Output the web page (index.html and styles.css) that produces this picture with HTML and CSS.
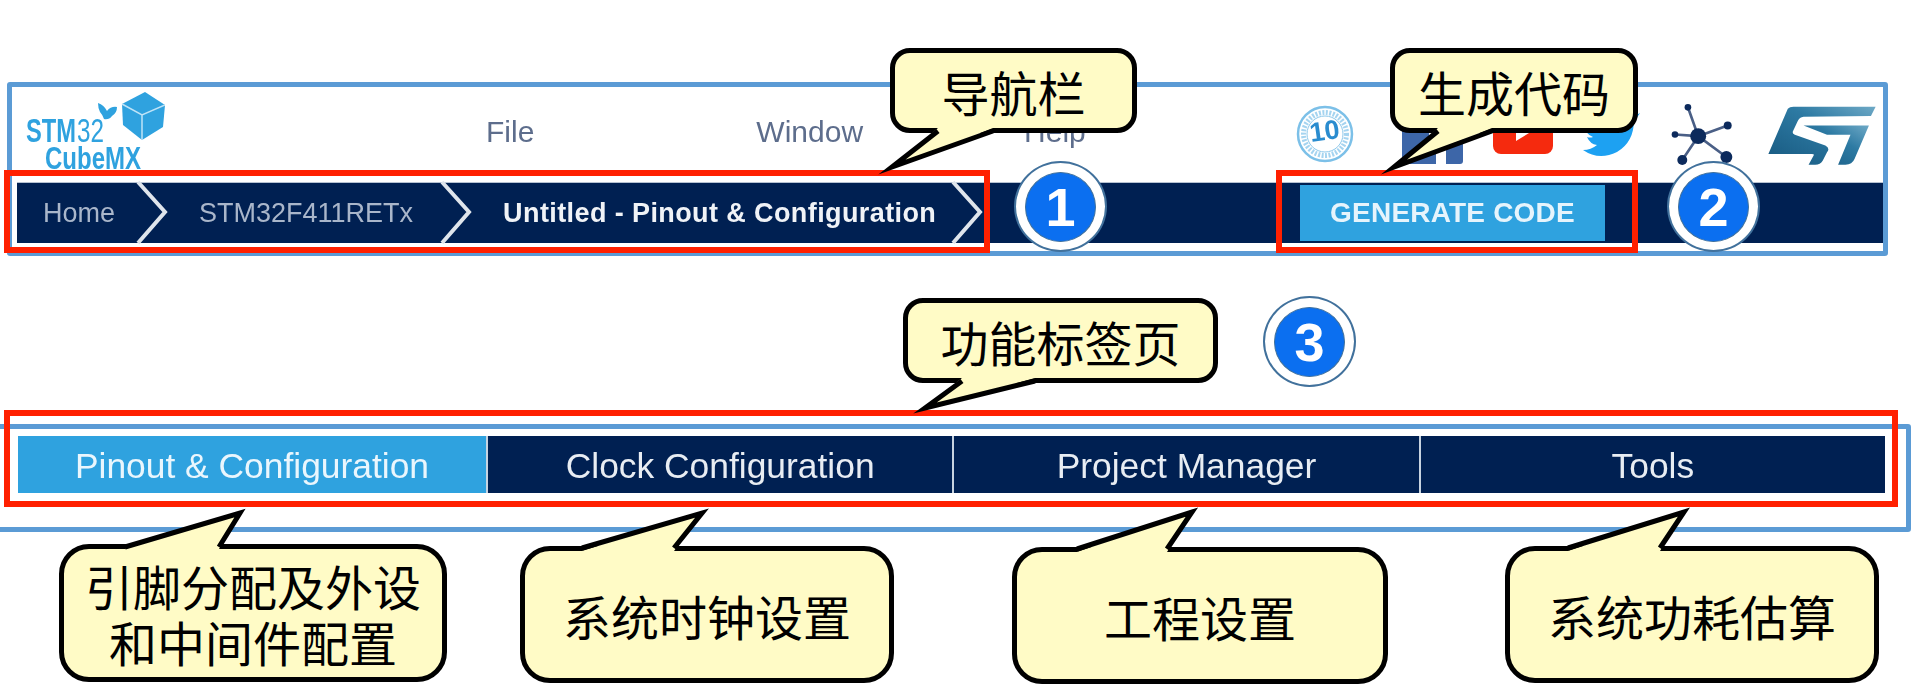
FILE: index.html
```html
<!DOCTYPE html>
<html lang="zh">
<head>
<meta charset="utf-8">
<title>STM32CubeMX</title>
<link rel="stylesheet" href="styles.css">
</head>
<body>
<section class="frame nav-frame">
  <div class="top-row">
    <svg class="logo" viewBox="15 87 150 96" width="150" height="96">
      <text class="logo-text" x="26" y="142" font-size="33" font-weight="700" textLength="50" lengthAdjust="spacingAndGlyphs">STM</text>
      <text class="logo-text" x="77" y="142" font-size="33" textLength="27" lengthAdjust="spacingAndGlyphs">32</text>
      <text class="logo-text" x="45" y="169" font-size="31" font-weight="700" textLength="96" lengthAdjust="spacingAndGlyphs">CubeMX</text>
      <path d="M98,103 Q104,105 107,111 Q111,106 117,107 Q117,113 112,116 Q109,120 104,119 Q102,114 100,112 Q98,108 98,103 Z" fill="#2fa2df"/>
      <path d="M145,92 L165,105 L163,127 L142,140 L123,125 L122,104 Z" fill="#2fa2df"/>
      <path d="M122,104 L142,115 L165,105 M142,115 L142,140" fill="none" stroke="#bfe3f7" stroke-width="1.5"/>
    </svg>
    <nav class="menu">
      <span class="menu-item file">File</span>
      <span class="menu-item window">Window</span>
      <span class="menu-item help">Help</span>
    </nav>
    <div class="icons">
      <svg class="ic-badge" viewBox="0 0 60 60" width="60" height="60">
        <circle cx="30" cy="30" r="27" fill="none" stroke="#7cc0e8" stroke-width="2.5"/>
        <circle cx="30" cy="30" r="21.5" fill="none" stroke="#a5d4f0" stroke-width="5" stroke-dasharray="2 1.5"/>
        <circle cx="30" cy="30" r="18" fill="#fff" stroke="#8ec8ea" stroke-width="1"/>
        <text class="badge-ten" x="30" y="36" text-anchor="middle" transform="rotate(-8 30 30)">10</text>
      </svg>
      <svg class="ic-fb" viewBox="0 0 61 60" width="61" height="60">
        <rect y="2" width="61" height="58" rx="3" fill="#3d66a8"/>
        <path d="M44,60 V38 H52 L53,28 H44 V21 Q44,17 48,17 H54 V8 H46 Q34,8 34,21 V28 H27 V38 H34 V60 Z" fill="#fff"/>
      </svg>
      <svg class="ic-yt" viewBox="0 0 60 60" width="60" height="60">
        <rect y="2" width="60" height="48" rx="8" fill="#f52a0e"/>
        <path d="M23,15 L41,26 L23,37 Z" fill="#fff"/>
      </svg>
      <svg class="ic-tw" viewBox="0 0 58 60" width="58" height="60">
        <path d="M57,9 Q52,12 48,13 Q53,9 54,4 Q49,7 44,8 Q38,2 30,5 Q22,9 24,18 Q12,17 4,7 Q0,16 7,22 Q4,22 1,21 Q1,29 10,33 Q7,34 4,33 Q7,40 14,41 Q8,46 0,46 Q16,57 34,48 Q51,38 51,16 Q55,13 57,9 Z" fill="#1da1f2"/>
      </svg>
      <svg class="ic-net" viewBox="36 35 190 190" width="63" height="63">
        <path d="M118,135 L87,48 M118,135 L207,103 M118,135 L48,130 M118,135 L70,207 M118,135 L203,198" stroke="#4a5f86" stroke-width="8" fill="none"/>
        <g fill="#0c2a5c">
          <circle cx="118" cy="135" r="24"/><circle cx="87" cy="48" r="10"/><circle cx="207" cy="103" r="12"/>
          <circle cx="48" cy="130" r="10"/><circle cx="70" cy="207" r="15"/><circle cx="203" cy="198" r="18"/>
        </g>
      </svg>
      <svg class="ic-st" viewBox="325 42 320 176" width="108" height="59">
        <defs>
          <linearGradient id="stg" x1="0" y1="1" x2="1" y2="0">
            <stop offset="0" stop-color="#17587f"/><stop offset="0.6" stop-color="#2d7aa3"/><stop offset="1" stop-color="#6ea9c6"/>
          </linearGradient>
        </defs>
        <path fill="url(#stg)" d="M383,50 Q388,44 400,44 L645,44 L631,72 L430,74 Q418,75 412,88 L398,118 Q396,125 404,128 L495,160 Q510,168 500,180 L487,205 Q480,217 465,217 L445,217 L460,190 Q463,185 455,185 L325,185 Z"/>
        <path fill="url(#stg)" d="M430,100 L625,100 L582,200 Q575,217 555,217 L533,217 L570,128 L500,128 Z"/>
      </svg>
    </div>
  </div>
  <div class="crumb-bar">
    <span class="crumb home">Home</span>
    <svg class="chev" viewBox="0 0 32 62" width="32" height="62"><path d="M2,0 L29,30 L2,61"/></svg>
    <span class="crumb chip">STM32F411RETx</span>
    <svg class="chev" viewBox="0 0 32 62" width="32" height="62"><path d="M2,0 L29,30 L2,61"/></svg>
    <span class="crumb current">Untitled - Pinout &amp; Configuration</span>
    <svg class="chev" viewBox="0 0 32 62" width="32" height="62"><path d="M2,0 L29,30 L2,61"/></svg>
    <button class="generate">GENERATE CODE</button>
  </div>
</section>

<section class="frame tab-frame">
  <div class="tabs">
    <div class="tab active">Pinout &amp; Configuration</div>
    <div class="tab">Clock Configuration</div>
    <div class="tab">Project Manager</div>
    <div class="tab">Tools</div>
  </div>
</section>

<div class="mark mark-nav"></div>
<div class="mark mark-gen"></div>
<div class="mark mark-tabs"></div>

<div class="num num-1"><span class="dot">1</span></div>
<div class="num num-2"><span class="dot">2</span></div>
<div class="num num-3"><span class="dot">3</span></div>

<div class="callout c-nav">导航栏</div>
<div class="callout c-gen">生成代码</div>
<div class="callout c-func">功能标签页</div>
<div class="callout big c-pin">引脚分配及外设<br>和中间件配置</div>
<div class="callout big c-clock">系统时钟设置</div>
<div class="callout big c-proj">工程设置</div>
<div class="callout big c-power">系统功耗估算</div>

<svg class="tails" viewBox="0 0 1916 697" width="1916" height="697">
  <polygon points="938,128 892,167 993,128"/><polyline points="938,131 892,167 993,131"/>
  <polygon points="1438,128 1394,167 1492,128"/><polyline points="1438,131 1394,167 1492,131"/>
  <polygon points="962,378 925,408 1035,378"/><polyline points="962,381 925,408 1035,381"/>
  <polygon points="125,549 240,513 219,549"/><polyline points="125,547 240,513 219,547"/>
  <polygon points="582,551 702,513 674,551"/><polyline points="582,548 702,513 674,548"/>
  <polygon points="1077,552 1192,512 1167,552"/><polyline points="1077,549 1192,512 1167,549"/>
  <polygon points="1568,551 1684,512 1660,551"/><polyline points="1568,548 1684,512 1660,548"/>
</svg>
</body>
</html>
```
FILE: styles.css
```css
* { box-sizing: border-box; }
html, body { margin: 0; height: 697px; overflow: hidden; background: #fff; }
body { position: relative; width: 1916px; font-family: "Liberation Sans", Arial, sans-serif; }

.frame { border: 5px solid #5b9bd5; border-radius: 3px; background: #fff; }
.nav-frame { margin: 82px 0 0 7px; width: 1881px; height: 174px; }
.tab-frame { margin: 168px 0 0 -5px; width: 1916px; height: 108px; padding: 7px 21px 0 18px; }

.top-row { display: flex; height: 96px; }
.top-row > *, .crumb-bar > *, .tabs { filter: blur(0.6px); }
.logo { margin-left: 3px; flex: none; }
.logo-text { font-family: "Liberation Sans", Arial, sans-serif; fill: #2fa2df; }

.menu { display: flex; align-items: center; font-size: 30px; color: #5d6d8c; padding-bottom: 7px; }
.file { margin-left: 321px; }
.window { margin-left: 222px; }
.help { margin-left: 161px; }

.icons { display: flex; align-items: flex-start; margin-left: auto; padding: 17px 7px 0 0; gap: 30px; }
.ic-badge { margin-right: 17px; }
.ic-net { margin: -1px 0 0 0; }
.ic-st { margin: 2px 0 0 4px; }
.badge-ten { font: 700 27px "Liberation Sans", Arial, sans-serif; fill: #2a8ccf; }

.crumb-bar {
  display: flex; align-items: center; height: 60px; margin: 0 0 0 5px;
  background: #002052; box-shadow: 0 -1px 0 #b6c2d2;
}
.crumb { font-size: 27px; white-space: nowrap; color: #a9b6ca; }
.home { padding: 0 21px 0 26px; }
.chip { padding: 0 27px 0 31px; }
.current { padding: 0 15px 0 31px; color: #f0f3f7; font-weight: 700; letter-spacing: .4px; }
.chev { flex: none; margin: 0; align-self: center; overflow: visible; }
.chev path { fill: none; stroke: #dfe5ec; stroke-width: 4; }
.generate {
  margin: 0 278px 0 auto; width: 305px; height: 56px; border: 0; padding: 0;
  background: #2fa2df; color: #e6f4fc;
  font: 700 28px "Liberation Sans", Arial, sans-serif; letter-spacing: .2px;
}

.tabs { display: flex; height: 57px; }
.tab {
  flex: 1; display: flex; align-items: center; justify-content: center; padding-top: 3px;
  background: #002052; color: #e8edf3; font-size: 35.4px; border-left: 2px solid #c7d3e0;
}
.tab.active { flex: 0 0 468px; background: #2fa2df; color: #eaf6fd; border-left: 0; }

.mark { position: absolute; border: 6px solid #ff2000; }
.mark-nav { left: 4px; top: 170px; width: 986px; height: 83px; }
.mark-gen { left: 1276px; top: 170px; width: 362px; height: 83px; }
.mark-tabs { left: 4px; top: 410px; width: 1894px; height: 97px; }

.num {
  position: absolute; width: 93px; height: 91px; border-radius: 50%;
  display: flex; align-items: center; justify-content: center;
  background: #fff; border: 2px solid #41719c;
}
.num-1 { left: 1014px; top: 161px; }
.num-2 { left: 1667px; top: 161px; }
.num-3 { left: 1263px; top: 296px; }
.dot {
  width: 71px; height: 70px; border-radius: 50%; background: #0b6ff0; border: 1px solid #41719c;
  display: flex; align-items: center; justify-content: center;
  color: #fff; font: 700 54px "Liberation Sans", Arial, sans-serif;
}

.callout {
  position: absolute; display: flex; align-items: center; justify-content: center; text-align: center;
  background: #fffbc6; border: 5px solid #000; border-radius: 20px; color: #000; padding-top: 10px;
  font: 48px/56px "Liberation Serif", "Noto Sans CJK SC", serif;
}
.callout.big { border-radius: 30px; }
.c-nav { left: 890px; top: 48px; width: 247px; height: 85px; }
.c-gen { left: 1390px; top: 48px; width: 248px; height: 85px; }
.c-func { left: 903px; top: 298px; width: 315px; height: 85px; }
.c-pin { left: 59px; top: 544px; width: 388px; height: 138px; }
.c-clock { left: 520px; top: 546px; width: 374px; height: 137px; }
.c-proj { left: 1012px; top: 547px; width: 376px; height: 137px; }
.c-power { left: 1505px; top: 546px; width: 374px; height: 137px; }

.tails { position: absolute; left: 0; top: 0; pointer-events: none; }
.tails polygon { fill: #fffbc6; }
.tails polyline { fill: none; stroke: #000; stroke-width: 5; stroke-linejoin: miter; stroke-miterlimit: 10; }
```
